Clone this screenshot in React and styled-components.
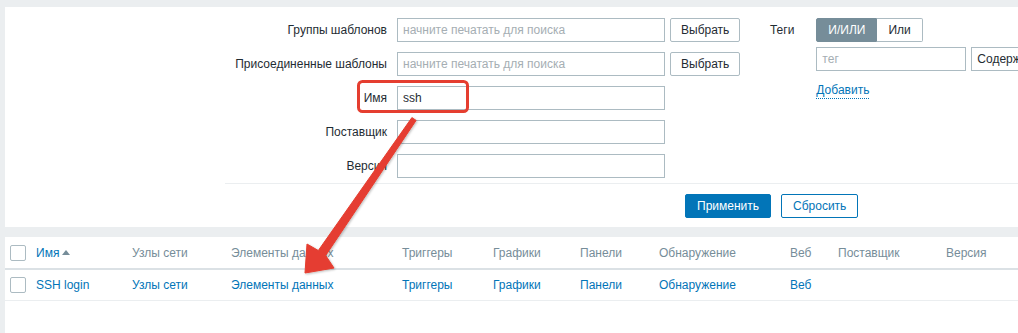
import React from "react";
import styled, { createGlobalStyle } from "styled-components";

const Global = createGlobalStyle`
  html, body { margin: 0; padding: 0; background: #ebeef0; overflow: hidden; }
  body { font-family: "Liberation Sans", Arial, sans-serif; font-size: 12px; color: #1f2c33; }
  * { box-sizing: border-box; }
`;

const Page = styled.div`
  position: relative;
  width: 1200px;
  height: 333px;
  padding: 7px 0 0 5px;
  display: flex;
  flex-direction: column;
`;

const FilterPanel = styled.section`
  background: #fff;
  display: flex;
  flex-direction: column;
`;

const FilterBody = styled.div`
  display: flex;
  padding: 11px 0 5px 220px;
`;

const FormColumn = styled.div`
  display: flex;
  flex-direction: column;
  gap: 10px;
`;

const FormRow = styled.div`
  display: flex;
  align-items: center;
  height: 24px;
`;

const Label = styled.label`
  width: ${(p) => p.$w || 172}px;
  padding-right: ${(p) => p.$pr ?? 10}px;
  text-align: right;
  line-height: 24px;
  white-space: nowrap;
  flex: none;
`;

const TextInput = styled.input`
  width: ${(p) => p.$w || 268}px;
  height: 24px;
  border: 1px solid #acbbc2;
  border-radius: 0;
  padding: 0 5px;
  font: inherit;
  color: #1f2c33;
  background: #fff;
  outline: none;
  &::placeholder { color: #a5aeb3; }
`;

const Button = styled.button`
  height: 24px;
  padding: 0 ${(p) => p.$px ?? 12}px;
  margin-left: ${(p) => p.$ml || 0}px;
  font: inherit;
  border-radius: 2px;
  cursor: pointer;
  border: 1px solid ${(p) => (p.$variant === "primary" || p.$variant === "alt" ? "#0275b8" : "#acbbc2")};
  background: ${(p) => (p.$variant === "primary" ? "#0275b8" : "#fff")};
  color: ${(p) => (p.$variant === "primary" ? "#fff" : p.$variant === "alt" ? "#0275b8" : "#1f2c33")};
`;

const TagsColumn = styled.div`
  display: flex;
  align-items: flex-start;
`;

const TagsControls = styled.div`
  display: flex;
  flex-direction: column;
  gap: 5px;
`;

const Segmented = styled.div`
  display: flex;
  height: 24px;
`;

const Segment = styled.span`
  height: 24px;
  line-height: 22px;
  padding: 0 11px;
  border: 1px solid ${(p) => (p.$active ? "#768d99" : "#acbbc2")};
  background: ${(p) => (p.$active ? "#768d99" : "#fff")};
  color: ${(p) => (p.$active ? "#fff" : "#1f2c33")};
  border-radius: ${(p) => (p.$first ? "2px 0 0 2px" : "0 2px 2px 0")};
  ${(p) => (!p.$first ? "border-left: none;" : "")}
`;

const TagRow = styled.div`
  display: flex;
  gap: 5px;
`;

const SelectBox = styled.div`
  width: 120px;
  height: 24px;
  border: 1px solid #acbbc2;
  line-height: 22px;
  padding: 0 5px;
  background: #fff;
`;

const AddLink = styled.a`
  margin-top: 7px;
  align-self: flex-start;
  color: #0275b8;
  text-decoration: none;
  border-bottom: 1px dotted #0275b8;
  line-height: 15px;
`;

const FilterFooter = styled.div`
  margin-left: 220px;
  border-top: 1px solid #ebeef0;
  padding: 10px 0 9px 460px;
  display: flex;
  gap: 10px;
`;

const TablePanel = styled.section`
  margin-top: 10px;
  background: #fff;
  flex: 1;
`;

const cols = "26px 96px 99px 171px 91px 87px 79px 131px 48px 108px 1fr";

const HeaderRow = styled.div`
  display: grid;
  grid-template-columns: ${cols};
  height: 33px;
  align-items: center;
  border-bottom: 2px solid #dbe1e5;
  color: #768d99;
`;

const DataRow = styled.div`
  display: grid;
  grid-template-columns: ${cols};
  height: 31px;
  align-items: center;
  border-bottom: 1px solid #ebeef0;
`;

const Cell = styled.div`
  padding-left: 5px;
  white-space: nowrap;
  display: flex;
  align-items: center;
  color: ${(p) => (p.$link ? "#0275b8" : "inherit")};
`;

const Checkbox = styled.span`
  width: 16px;
  height: 16px;
  border: 1px solid #acbbc2;
  border-radius: 2px;
  background: #fff;
  display: inline-block;
`;

const SortArrow = styled.span`
  display: inline-block;
  width: 0;
  height: 0;
  margin-left: 3px;
  border-left: 4px solid transparent;
  border-right: 4px solid transparent;
  border-bottom: 5px solid #768d99;
`;

const Overlay = styled.svg`
  position: absolute;
  left: 0;
  top: 0;
  width: 1018px;
  height: 333px;
  pointer-events: none;
`;

export default function App() {
  const columns = ["Узлы сети", "Элементы данных", "Триггеры", "Графики", "Панели", "Обнаружение", "Веб"];
  return (
    <>
      <Global />
      <Page>
        <FilterPanel>
          <FilterBody>
            <FormColumn>
              <FormRow>
                <Label>Группы шаблонов</Label>
                <TextInput placeholder="начните печатать для поиска" />
                <Button $ml={5} $px={10}>Выбрать</Button>
              </FormRow>
              <FormRow>
                <Label>Присоединенные шаблоны</Label>
                <TextInput placeholder="начните печатать для поиска" />
                <Button $ml={5} $px={10}>Выбрать</Button>
              </FormRow>
              <FormRow>
                <Label>Имя</Label>
                <TextInput defaultValue="ssh" />
              </FormRow>
              <FormRow>
                <Label>Поставщик</Label>
                <TextInput />
              </FormRow>
              <FormRow>
                <Label>Версия</Label>
                <TextInput />
              </FormRow>
            </FormColumn>
            <TagsColumn>
              <Label $w={76} $pr={22}>Теги</Label>
              <TagsControls>
                <Segmented>
                  <Segment $active $first>И/ИЛИ</Segment>
                  <Segment>Или</Segment>
                </Segmented>
                <TagRow>
                  <TextInput $w={150} placeholder="тег" />
                  <SelectBox>Содержит</SelectBox>
                </TagRow>
                <AddLink>Добавить</AddLink>
              </TagsControls>
            </TagsColumn>
          </FilterBody>
          <FilterFooter>
            <Button $variant="primary" $px={11}>Применить</Button>
            <Button $variant="alt" $px={11}>Сбросить</Button>
          </FilterFooter>
        </FilterPanel>
        <TablePanel>
          <HeaderRow>
            <Cell><Checkbox /></Cell>
            <Cell $link>Имя<SortArrow /></Cell>
            {columns.map((c) => <Cell key={c}>{c}</Cell>)}
            <Cell>Поставщик</Cell>
            <Cell>Версия</Cell>
          </HeaderRow>
          <DataRow>
            <Cell><Checkbox /></Cell>
            <Cell $link>SSH login</Cell>
            {columns.map((c) => <Cell key={c} $link>{c}</Cell>)}
            <Cell />
            <Cell />
          </DataRow>
        </TablePanel>
        <Overlay viewBox="0 0 1018 333">
          <defs>
            <filter id="sh" x="-20%" y="-20%" width="140%" height="140%">
              <feDropShadow dx="1" dy="1" stdDeviation="1" floodColor="#000" floodOpacity="0.25" />
            </filter>
          </defs>
          <rect x="358.5" y="81.5" width="109" height="30" rx="4" fill="none" stroke="#e53e30" strokeWidth="3" />
          <polygon
            filter="url(#sh)"
            fill="#e53e30"
            stroke="#e53e30"
            strokeWidth="1"
            strokeLinejoin="round"
            points="411.9,117.6 416.1,120.4 325.7,255.5 334,268 305,273 307,244 318.3,250.5"
          />
        </Overlay>
      </Page>
    </>
  );
}
